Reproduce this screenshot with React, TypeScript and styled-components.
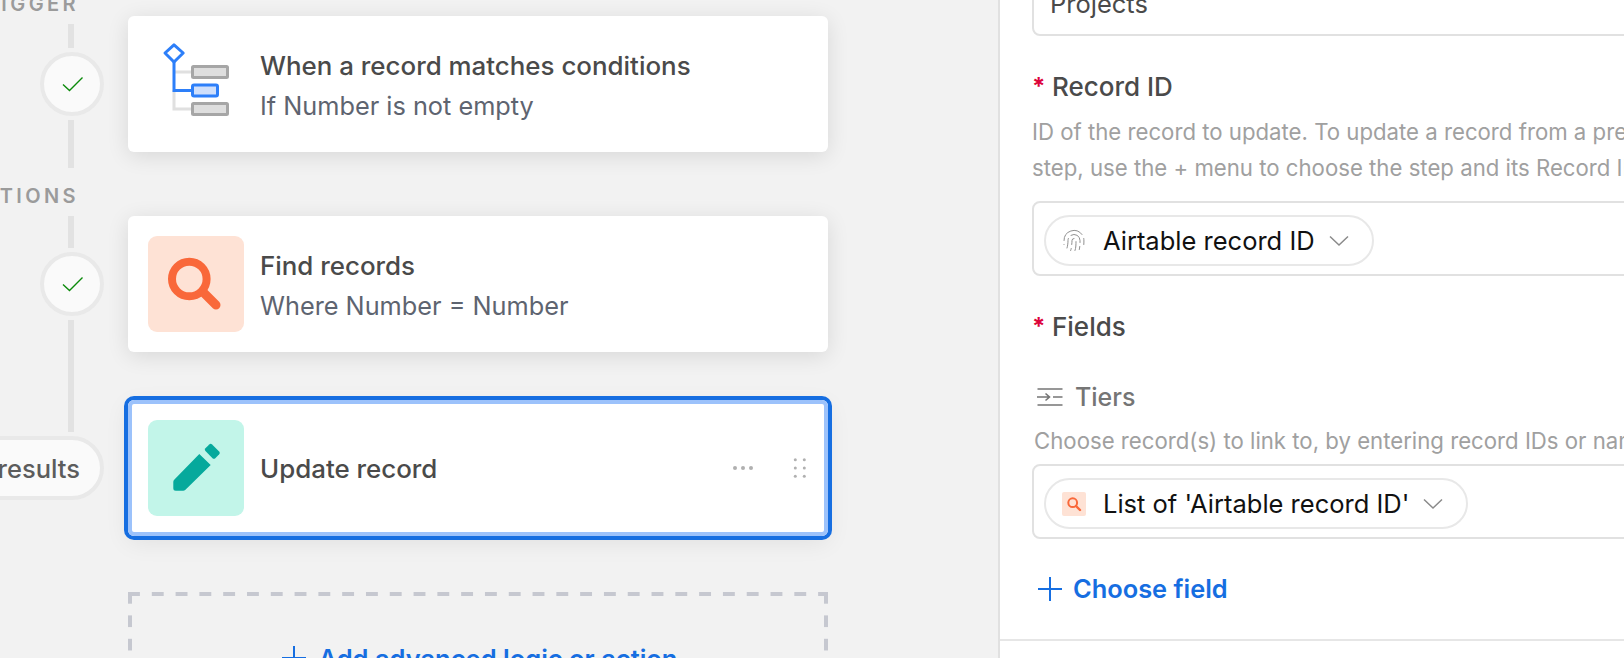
import React from "react";
import styled, { createGlobalStyle } from "styled-components";
import { Fingerprint } from "lucide-react";

const Global = createGlobalStyle`
  html, body { margin: 0; padding: 0; background: #f2f2f2; }
  * { box-sizing: border-box; }
  body { font-family: Inter, "Liberation Sans", sans-serif; }
`;

const Page = styled.div`
  width: 1624px;
  height: 658px;
  display: flex;
  overflow: hidden;
  background: #f2f2f2;
`;

const Canvas = styled.div`
  width: 998px;
  flex: none;
  display: flex;
  align-items: flex-start;
`;

const Rail = styled.div`
  width: 128px;
  flex: none;
  margin-top: -24px;
  padding-right: 24px;
  display: flex;
  flex-direction: column;
  align-items: flex-end;
`;

const RailLabel = styled.div`
  height: 48px;
  padding-top: 8px;
  line-height: 40px;
  margin-right: 25px;
  font-size: 20px;
  font-weight: 600;
  letter-spacing: 3.4px;
  color: #9b9b9b;
  margin-left: -60px;
  white-space: nowrap;
`;

const Connector = styled.div<{ $h: number }>`
  width: 6px;
  height: ${(p) => p.$h}px;
  margin-right: 30px;
  background: #e2e2e2;
`;

const Circle = styled.div`
  width: 64px;
  height: 64px;
  margin: 4px 0;
  padding-left: 1px;
  border-radius: 50%;
  border: 4px solid #e9e9e9;
  background: #fafafa;
  display: flex;
  align-items: center;
  justify-content: center;
`;

const Pill = styled.div`
  height: 64px;
  margin-top: 4px;
  padding: 0 20px 0 24px;
  border-radius: 32px;
  border: 4px solid #e9e9e9;
  background: #fafafa;
  display: flex;
  align-items: center;
  font-size: 25.5px;
  font-weight: 500;
  color: #5c5c5c;
  white-space: nowrap;
  flex: none;
`;

const Cards = styled.div`
  width: 700px;
  flex: none;
  padding-top: 16px;
  display: flex;
  flex-direction: column;
`;

const Card = styled.div<{ $gap: number; $selected?: boolean }>`
  height: 136px;
  margin-bottom: ${(p) => p.$gap}px;
  padding: 20px;
  display: flex;
  align-items: center;
  background: #fff;
  border-radius: 6px;
  box-shadow: ${(p) =>
    p.$selected
      ? "inset 0 0 0 4px #9cc2fb, 0 0 0 4px #166ee1, 0 6px 24px rgba(0,0,0,.08)"
      : "0 4px 22px rgba(0,0,0,.11)"};
`;

const Tile = styled.div<{ $bg?: string }>`
  width: 96px;
  height: 96px;
  flex: none;
  border-radius: 9px;
  background: ${(p) => p.$bg ?? "transparent"};
  svg { display: block; }
`;

const CardText = styled.div`
  margin-left: 16px;
  padding-top: 2px;
  flex: 1;
  display: flex;
  flex-direction: column;
`;

const CardTitle = styled.div<{ $alone?: boolean }>`
  font-size: 25.9px;
  line-height: 39px;
  font-weight: 550;
  color: #4a4a4a;
  margin-top: ${(p) => (p.$alone ? -1 : 0)}px;
`;

const CardSub = styled.div`
  font-size: 25.3px;
  line-height: 39px;
  padding-top: 1px;
  margin-bottom: -1px;
  color: #5e6470;
`;

const CardTools = styled.svg`
  flex: none;
`;

const Dashed = styled.div`
  height: 132px;
  padding-left: 3px;
  display: flex;
  align-items: center;
  justify-content: center;
  background-image:
    linear-gradient(90deg, #c6c8d0 12px, transparent 12px),
    linear-gradient(180deg, #c6c8d0 12px, transparent 12px),
    linear-gradient(180deg, #c6c8d0 12px, transparent 12px);
  background-size: 23.8px 4px, 4px 23.4px, 4px 23.4px;
  background-repeat: repeat-x, repeat-y, repeat-y;
  background-position: 0 0, 0 0, 100% 0;
`;

const BlueAction = styled.div<{ $size?: number }>`
  display: flex;
  align-items: center;
  font-size: ${(p) => p.$size ?? 25.5}px;
  font-weight: 600;
  color: #166ee1;
  white-space: nowrap;
`;

const Panel = styled.div`
  flex: 1;
  min-width: 0;
  overflow: hidden;
  background: #fff;
  border-left: 2px solid #e1e1e1;
`;

const PanelBody = styled.div`
  margin-top: -29px;
  padding-left: 32px;
  width: 800px;
  height: 700px;
`;

const FieldBox = styled.div<{ $h: number; $mb: number; $token?: boolean }>`
  height: ${(p) => p.$h}px;
  margin-bottom: ${(p) => p.$mb}px;
  width: 780px;
  border: 2px solid #e1e1e1;
  border-radius: 8px;
  display: flex;
  align-items: center;
  padding-left: 10px;
  padding-top: ${(p) => (p.$token ? 4 : 0)}px;
`;

const BoxValue = styled.div`
  margin-left: 6px;
  font-size: 25.5px;
  color: #4a4a4a;
`;

const Label = styled.div<{ $mb: number }>`
  display: flex;
  height: 32px;
  line-height: 32px;
  margin-bottom: ${(p) => p.$mb}px;
  font-size: 26px;
  font-weight: 550;
  color: #4a4a4a;
`;

const Required = styled.span`
  width: 20px;
  color: #dc043b;
  font-weight: 700;
  font-size: 24px;
`;

const Help = styled.div<{ $ml?: number; $mb?: number }>`
  margin-left: ${(p) => p.$ml ?? 0}px;
  margin-bottom: ${(p) => p.$mb ?? 0}px;
  font-size: 22.2px;
  line-height: 36px;
  color: #a0a0a0;
  white-space: nowrap;
`;

const TiersRow = styled.div`
  display: flex;
  align-items: center;
  height: 32px;
  margin-bottom: 10px;
  padding-left: 4px;
  font-size: 25px;
  font-weight: 500;
  color: #757575;
  svg { margin-right: 12px; }
`;

const Token = styled.div`
  height: 51px;
  border: 2px solid #e8e8e8;
  border-radius: 26px;
  display: inline-flex;
  align-items: center;
  padding: 0 23px 0 16px;
  font-size: 25.5px;
  color: #111;
  white-space: nowrap;
`;

const TokenIcon = styled.span<{ $bg?: string }>`
  width: 24px;
  height: 24px;
  margin-right: 17px;
  flex: none;
  display: flex;
  align-items: center;
  justify-content: center;
  border-radius: 2px;
  background: ${(p) => p.$bg ?? "transparent"};
`;

const Chevron = styled.svg`
  margin-left: 14px;
  flex: none;
`;

const Footer = styled.div`
  height: 2px;
  margin-left: -32px;
  width: 800px;
  background: #e6e6e6;
`;

const ChooseRow = styled.div`
  height: 40px;
  margin: 34px 0 26px 6px;
`;

const Check = () => (
  <svg width="22" height="16" viewBox="0 0 22 16" fill="none">
    <path d="M1 8.5 L7.5 14.5 L20.5 1.5" stroke="#0b8a0b" strokeWidth="1.4" />
  </svg>
);

const ChevronDown = () => (
  <Chevron width="20" height="12" viewBox="0 0 20 12" fill="none">
    <path d="M1 1.5 L10 10 L19 1.5" stroke="#8a8a8a" strokeWidth="1.5" />
  </Chevron>
);

const PlusSvg = styled.svg<{ $mr: number }>`
  margin-right: ${(p) => p.$mr}px;
  flex: none;
`;

const Plus = ({ mr }: { mr: number }) => (
  <PlusSvg $mr={mr} width="24" height="24" viewBox="0 0 24 24" fill="none">
    <path d="M12 0 V24 M0 12 H24" stroke="#166ee1" strokeWidth="2" />
  </PlusSvg>
);

export default function App() {
  return (
    <Page>
      <Global />
      <Canvas>
        <Rail>
          <RailLabel>TRIGGER</RailLabel>
          <Connector $h={24} />
          <Circle><Check /></Circle>
          <Connector $h={48} />
          <RailLabel>ACTIONS</RailLabel>
          <Connector $h={32} />
          <Circle><Check /></Circle>
          <Connector $h={112} />
          <Pill>results</Pill>
        </Rail>
        <Cards>
          <Card $gap={64}>
            <Tile>
              <svg width="96" height="96" viewBox="0 0 96 96" fill="none">
                <path d="M26 36 H43 M26 54 V73 H43" stroke="#e0e0e0" strokeWidth="3" />
                <rect x="44.5" y="30.5" width="35" height="11" rx="1" fill="#dedede" stroke="#a6a6a6" strokeWidth="3" />
                <rect x="44.5" y="67.5" width="35" height="11" rx="1" fill="#dedede" stroke="#a6a6a6" strokeWidth="3" />
                <path d="M26 26 V54.5 H43" stroke="#2d7ff9" strokeWidth="3" />
                <rect x="44.5" y="49" width="25" height="11" rx="1.5" fill="#cfdffb" stroke="#2d7ff9" strokeWidth="3" />
                <path d="M26 8.8 L35.2 17 L26 26 L17 17 Z" fill="#fff" stroke="#2d7ff9" strokeWidth="3" strokeLinejoin="round" />
              </svg>
            </Tile>
            <CardText>
              <CardTitle>When a record matches conditions</CardTitle>
              <CardSub>If Number is not empty</CardSub>
            </CardText>
          </Card>
          <Card $gap={48}>
            <Tile $bg="#fee2d5">
              <svg width="96" height="96" viewBox="0 0 96 96" fill="none">
                <circle cx="41.3" cy="43" r="17.3" stroke="#f9683a" strokeWidth="8" />
                <path d="M56.5 57.5 L68 69" stroke="#f9683a" strokeWidth="9" strokeLinecap="round" />
              </svg>
            </Tile>
            <CardText>
              <CardTitle>Find records</CardTitle>
              <CardSub>Where Number = Number</CardSub>
            </CardText>
          </Card>
          <Card $gap={56} $selected>
            <Tile $bg="#c2f5e9">
              <svg width="96" height="96" viewBox="0 0 96 96" fill="#06a99c">
                <path d="M25.3 62 a3 3 0 0 1 .9 -2.2 L51.3 34 L62.7 45 L37.2 70 a3 3 0 0 1 -2 .8 H27.8 a2.5 2.5 0 0 1 -2.5 -2.5 Z" />
                <rect x="-7" y="-4.7" width="14" height="9.4" rx="2" transform="translate(64.3 31.3) rotate(45)" />
              </svg>
            </Tile>
            <CardText><CardTitle $alone>Update record</CardTitle></CardText>
            <CardTools width="80" height="24" viewBox="0 0 80 24" fill="#b0b0b0">
              <circle cx="7" cy="12" r="2" />
              <circle cx="15" cy="12" r="2" />
              <circle cx="23" cy="12" r="2" />
              <circle cx="67.3" cy="3.7" r="1.5" />
              <circle cx="67.3" cy="12" r="1.5" />
              <circle cx="67.3" cy="20.3" r="1.5" />
              <circle cx="76.3" cy="3.7" r="1.5" />
              <circle cx="76.3" cy="12" r="1.5" />
              <circle cx="76.3" cy="20.3" r="1.5" />
            </CardTools>
          </Card>
          <Dashed>
            <BlueAction><Plus mr={13} />Add advanced logic or action</BlueAction>
          </Dashed>
        </Cards>
      </Canvas>
      <Panel>
        <PanelBody>
          <FieldBox $h={65} $mb={35}><BoxValue>Projects</BoxValue></FieldBox>
          <Label $mb={11}><Required>*</Required>Record ID</Label>
          <Help>ID of the record to update. To update a record from a previous</Help>
          <Help $mb={15}>step, use the + menu to choose the step and its Record ID</Help>
          <FieldBox $h={75} $mb={35} $token>
            <Token>
              <TokenIcon><Fingerprint size={25} strokeWidth={1} color="#8f8f8f" /></TokenIcon>
              Airtable record ID
              <ChevronDown />
            </Token>
          </FieldBox>
          <Label $mb={38}><Required>*</Required>Fields</Label>
          <TiersRow>
            <svg width="27" height="20" viewBox="0 0 27 20" fill="none" stroke="#757575" strokeWidth="1.6">
              <path d="M1.5 2 H26.5 M1 10 H13 M9.5 6.5 L13.5 10 L9.5 13.5 M17 10 H26.5 M1.5 18 H26.5" />
            </svg>
            Tiers
          </TiersRow>
          <Help $ml={2} $mb={5}>Choose record(s) to link to, by entering record IDs or names</Help>
          <FieldBox $h={75} $mb={0} $token>
            <Token>
              <TokenIcon $bg="#fee2d5">
                <svg width="16" height="16" viewBox="0 0 16 16" fill="none" stroke="#f9683a">
                  <circle cx="6.7" cy="6.7" r="4.4" strokeWidth="2" />
                  <path d="M10 10 L14 14" strokeWidth="2.4" strokeLinecap="round" />
                </svg>
              </TokenIcon>
              List of 'Airtable record ID'
              <ChevronDown />
            </Token>
          </FieldBox>
          <ChooseRow>
            <BlueAction $size={25.4}><Plus mr={11} />Choose field</BlueAction>
          </ChooseRow>
          <Footer />
        </PanelBody>
      </Panel>
    </Page>
  );
}
